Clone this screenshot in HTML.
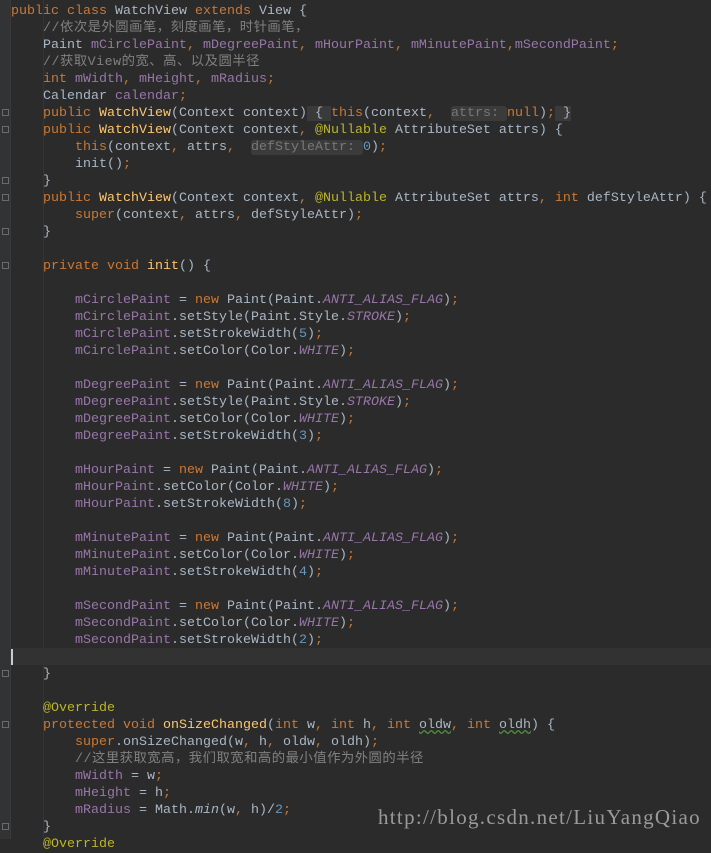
<!DOCTYPE html>
<html><head><meta charset="utf-8"><style>
html,body{margin:0;padding:0;background:#2b2b2b;width:711px;height:839px;overflow:hidden}
#g{position:absolute;left:0;top:0;width:10px;height:839px;background:#313335;border-right:1px solid #3a3a3a}
#cl{position:absolute;left:11px;top:648px;width:700px;height:17px;background:#323232}
#cur{position:absolute;left:11px;top:649px;width:2px;height:16px;background:#ccc}
.ig{position:absolute;top:0;width:1px;height:839px;background:#353535}
pre{position:absolute;left:11px;top:3px;margin:0;font-family:"Liberation Mono","Noto Sans CJK SC",monospace;font-size:13.33px;line-height:17px;color:#a9b7c6;white-space:pre}
.k{color:#cc7832}.f{color:#9876aa}.c{color:#808080}.m{color:#ffc66d}.a{color:#bbb529}.n{color:#6897bb}
.c{letter-spacing:0.5px}
.s{color:#9876aa;font-style:italic}
.h{background:#3b3b3b;color:#787878;border-radius:3px}
.b{background:#3a3a3a}
.u{text-decoration:underline wavy #4e8f3a}
.fm{position:absolute;left:2px;width:7px;height:7px;border:1px solid #6a6a6a;box-sizing:border-box}
#wm{position:absolute;left:378px;top:805px;font-family:"Liberation Serif",serif;font-size:21px;color:#9a9a9a;letter-spacing:1.3px}
</style></head><body>
<div id="g"></div>
<div class="ig" style="left:43px"></div>
<div id="cl"></div>
<div class="fm" style="top:109px"></div>
<div class="fm" style="top:126px"></div>
<div class="fm" style="top:177px"></div>
<div class="fm" style="top:194px"></div>
<div class="fm" style="top:228px"></div>
<div class="fm" style="top:262px"></div>
<div class="fm" style="top:670px"></div>
<div class="fm" style="top:721px"></div>
<div class="fm" style="top:823px"></div>
<div id="cur"></div>
<pre><span class="k">public class </span>WatchView <span class="k">extends </span>View {
    <span class="c">//依次是外圆画笔，刻度画笔，时针画笔，</span>
    Paint <span class="f">mCirclePaint</span><span class="k">, </span><span class="f">mDegreePaint</span><span class="k">, </span><span class="f">mHourPaint</span><span class="k">, </span><span class="f">mMinutePaint</span><span class="k">,</span><span class="f">mSecondPaint</span><span class="k">;</span>
    <span class="c">//获取View的宽、高、以及圆半径</span>
    <span class="k">int </span><span class="f">mWidth</span><span class="k">, </span><span class="f">mHeight</span><span class="k">, </span><span class="f">mRadius</span><span class="k">;</span>
    Calendar <span class="f">calendar</span><span class="k">;</span>
    <span class="k">public </span><span class="m">WatchView</span>(Context context)<span class="b"> { </span><span class="k">this</span>(context<span class="k">, </span> <span class="h">attrs: </span><span class="k">null</span>)<span class="k">;</span><span class="b"> }</span>
    <span class="k">public </span><span class="m">WatchView</span>(Context context<span class="k">, </span><span class="a">@Nullable </span>AttributeSet attrs) {
        <span class="k">this</span>(context<span class="k">, </span>attrs<span class="k">, </span> <span class="h">defStyleAttr: </span><span class="n">0</span>)<span class="k">;</span>
        init()<span class="k">;</span>
    }
    <span class="k">public </span><span class="m">WatchView</span>(Context context<span class="k">, </span><span class="a">@Nullable </span>AttributeSet attrs<span class="k">, int </span>defStyleAttr) {
        <span class="k">super</span>(context<span class="k">, </span>attrs<span class="k">, </span>defStyleAttr)<span class="k">;</span>
    }

    <span class="k">private void </span><span class="m">init</span>() {

        <span class="f">mCirclePaint </span>= <span class="k">new </span>Paint(Paint.<span class="s">ANTI_ALIAS_FLAG</span>)<span class="k">;</span>
        <span class="f">mCirclePaint</span>.setStyle(Paint.Style.<span class="s">STROKE</span>)<span class="k">;</span>
        <span class="f">mCirclePaint</span>.setStrokeWidth(<span class="n">5</span>)<span class="k">;</span>
        <span class="f">mCirclePaint</span>.setColor(Color.<span class="s">WHITE</span>)<span class="k">;</span>

        <span class="f">mDegreePaint </span>= <span class="k">new </span>Paint(Paint.<span class="s">ANTI_ALIAS_FLAG</span>)<span class="k">;</span>
        <span class="f">mDegreePaint</span>.setStyle(Paint.Style.<span class="s">STROKE</span>)<span class="k">;</span>
        <span class="f">mDegreePaint</span>.setColor(Color.<span class="s">WHITE</span>)<span class="k">;</span>
        <span class="f">mDegreePaint</span>.setStrokeWidth(<span class="n">3</span>)<span class="k">;</span>

        <span class="f">mHourPaint </span>= <span class="k">new </span>Paint(Paint.<span class="s">ANTI_ALIAS_FLAG</span>)<span class="k">;</span>
        <span class="f">mHourPaint</span>.setColor(Color.<span class="s">WHITE</span>)<span class="k">;</span>
        <span class="f">mHourPaint</span>.setStrokeWidth(<span class="n">8</span>)<span class="k">;</span>

        <span class="f">mMinutePaint </span>= <span class="k">new </span>Paint(Paint.<span class="s">ANTI_ALIAS_FLAG</span>)<span class="k">;</span>
        <span class="f">mMinutePaint</span>.setColor(Color.<span class="s">WHITE</span>)<span class="k">;</span>
        <span class="f">mMinutePaint</span>.setStrokeWidth(<span class="n">4</span>)<span class="k">;</span>

        <span class="f">mSecondPaint </span>= <span class="k">new </span>Paint(Paint.<span class="s">ANTI_ALIAS_FLAG</span>)<span class="k">;</span>
        <span class="f">mSecondPaint</span>.setColor(Color.<span class="s">WHITE</span>)<span class="k">;</span>
        <span class="f">mSecondPaint</span>.setStrokeWidth(<span class="n">2</span>)<span class="k">;</span>

    }

    <span class="a">@Override</span>
    <span class="k">protected void </span><span class="m">onSizeChanged</span>(<span class="k">int </span>w<span class="k">, int </span>h<span class="k">, int </span><span class="u">oldw</span><span class="k">, int </span><span class="u">oldh</span>) {
        <span class="k">super</span>.onSizeChanged(w<span class="k">, </span>h<span class="k">, </span>oldw<span class="k">, </span>oldh)<span class="k">;</span>
        <span class="c">//这里获取宽高，我们取宽和高的最小值作为外圆的半径</span>
        <span class="f">mWidth </span>= w<span class="k">;</span>
        <span class="f">mHeight </span>= h<span class="k">;</span>
        <span class="f">mRadius </span>= Math.<span style="font-style:italic">min</span>(w<span class="k">, </span>h)/<span class="n">2</span><span class="k">;</span>
    }
    <span class="a">@Override</span></pre>
<div id="wm">http://blog.csdn.net/LiuYangQiao</div>
</body></html>
